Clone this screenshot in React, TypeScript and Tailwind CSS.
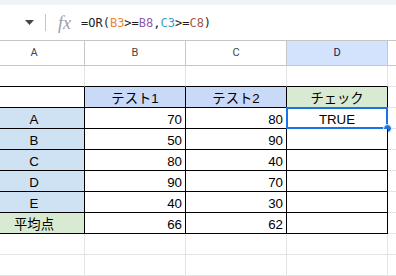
import clsx from "clsx";

type Row = {
    a: string;
    b: string | number;
    c: string | number;
    d: string;
    head?: boolean;
    avg?: boolean;
};

const rows: Row[] = [
    { a: "", b: "テスト1", c: "テスト2", d: "チェック", head: true },
    { a: "A", b: 70, c: 80, d: "TRUE" },
    { a: "B", b: 50, c: 90, d: "" },
    { a: "C", b: 80, c: 40, d: "" },
    { a: "D", b: 90, c: 70, d: "" },
    { a: "E", b: 40, c: 30, d: "" },
    { a: "平均点", b: 66, c: 62, d: "", avg: true },
];

const cellFont = "font-['Liberation_Sans','Noto_Sans_CJK_JP',sans-serif]";

const FormulaBar = () => (
    <div className="h-[41px] border-b border-[#c4c7c5] flex flex-col">
        <div className="h-[5px] bg-[#eef2f9]" />
        <div className="flex-1 flex items-center bg-white">
            <svg width="9" height="5" viewBox="0 0 9 5" className="ml-[25px]">
                <path d="M0 0h9L4.5 5z" fill="#444746" />
            </svg>
            <div className="ml-[11px] w-px h-[17px] bg-[#c4c7c5]" />
            <span className="ml-[12px] text-[18px] italic text-[#9aa0a6] font-['Liberation_Serif',serif] leading-none">
                fx
            </span>
            <span className="ml-[10px] text-[12px] text-[#1f1f1f] font-['DejaVu_Sans_Mono',monospace] leading-none">
                =OR(<span className="text-[#e8873a]">B3</span>&gt;=<span className="text-[#8e5ca8]">B8</span>,
                <span className="text-[#3c9dc4]">C3</span>&gt;=<span className="text-[#a5574c]">C8</span>)
            </span>
        </div>
    </div>
);

const ColHeaders = () => (
    <div className="grid grid-cols-[101px_101px_101px_101px_1fr] h-[25px] text-[11px] font-['Roboto','Liberation_Sans',sans-serif] text-[#444746]">
        {["A", "B", "C"].map((l) => (
            <div key={l} className="border-r border-b border-[#c4c7c5] flex items-center justify-center">
                {l}
            </div>
        ))}
        <div className="border-r border-b border-[#c4c7c5] bg-[#d3e3fd] text-[#0b1f4a] flex items-center justify-center">
            D
        </div>
        <div className="border-b border-[#c4c7c5]" />
    </div>
);

const GridRow = ({ black }: { black?: boolean }) => (
    <div className="grid grid-cols-[101px_101px_101px_101px_1fr] h-[21px]">
        {[0, 1, 2, 3].map((i) => (
            <div
                key={i}
                className={clsx("border-r border-b border-r-[#e2e3e3]", black ? "border-b-black" : "border-b-[#e2e3e3]")}
            />
        ))}
        <div className="border-b border-[#e2e3e3]" />
    </div>
);

const TableRow = ({ row, selected }: { row: Row; selected?: boolean }) => {
    const base = "border-r border-b border-black flex items-end pb-px leading-[15px] text-[13.3px] text-black";
    return (
        <div className={clsx("grid grid-cols-[101px_101px_101px_101px_1fr] h-[21px]", cellFont)}>
            <div
                className={clsx(
                    base,
                    "justify-center",
                    row.head ? "bg-white" : row.avg ? "bg-[#d9ead3]" : "bg-[#cfe2f3]"
                )}
            >
                {row.a}
            </div>
            {[row.b, row.c].map((v, i) => (
                <div
                    key={i}
                    className={clsx(base, row.head ? "justify-center bg-[#c9daf8]" : "justify-end pr-[3px] bg-white")}
                >
                    {v}
                </div>
            ))}
            <div className={clsx(base, "justify-center relative", row.head ? "bg-[#d9ead3]" : "bg-white")}>
                {row.d}
                {selected && (
                    <>
                        <div className="absolute -top-px -left-px -right-px -bottom-px border-2 border-[#1a73e8]" />
                        <div className="absolute -right-[5px] -bottom-[5px] w-[9px] h-[9px] rounded-full bg-[#1a73e8] border border-white" />
                    </>
                )}
            </div>
            <div className="border-b border-[#e2e3e3]" />
        </div>
    );
};

export default function App() {
    return (
        <div className="w-[396px] h-[276px] overflow-hidden bg-white">
            <FormulaBar />
            <div className="-ml-[16px] w-[412px]">
                <ColHeaders />
                <GridRow black />
                {rows.map((r, i) => (
                    <TableRow key={i} row={r} selected={i === 1} />
                ))}
                <GridRow />
                <GridRow />
            </div>
        </div>
    );
}
